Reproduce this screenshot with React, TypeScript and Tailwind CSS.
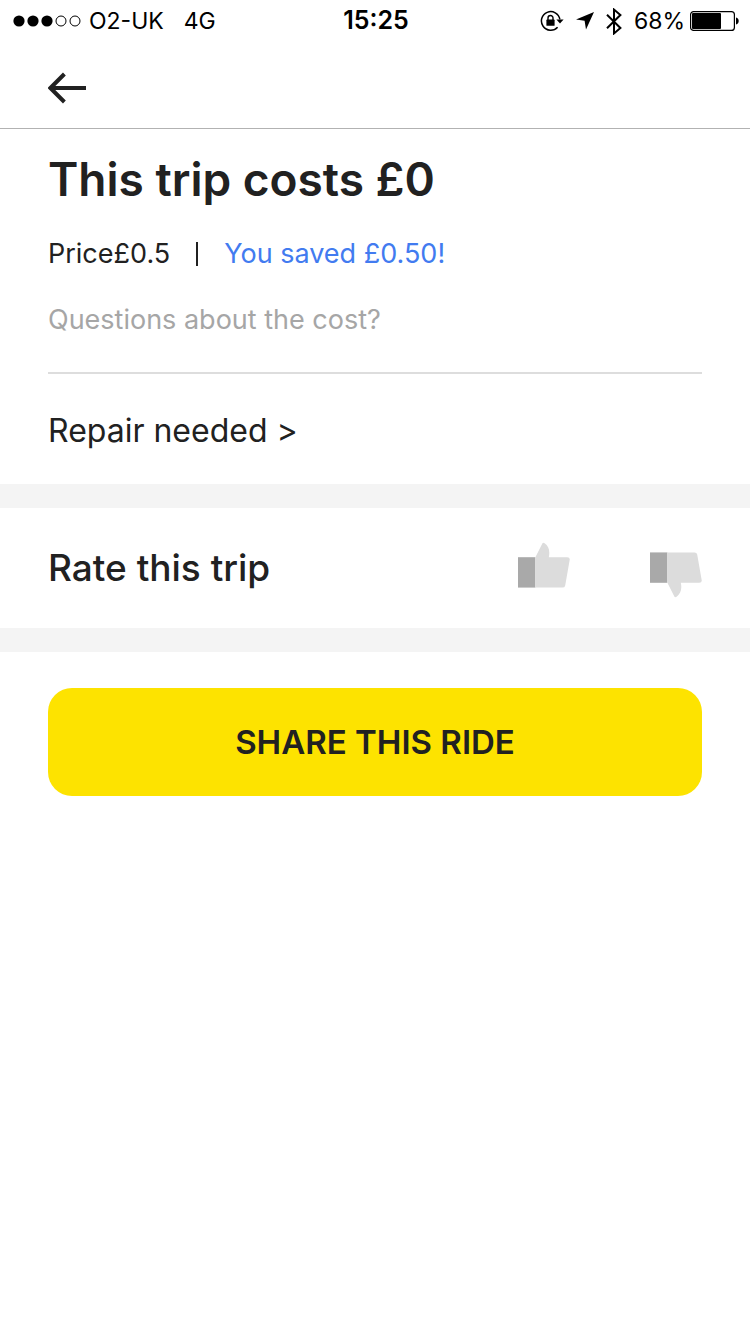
function SignalDots() {
  return (
    <svg width="68" height="12" viewBox="0 0 68 12" aria-hidden="true">
      {[6, 20, 34].map((x) => (
        <circle key={x} cx={x} cy="6" r="5.6" fill="#000" />
      ))}
      {[48, 62].map((x) => (
        <circle key={x} cx={x} cy="6" r="5" fill="none" stroke="#000" />
      ))}
    </svg>
  );
}

function RotationLockIcon() {
  return (
    <svg width="24" height="22" viewBox="0 0 24 22" fill="none" aria-hidden="true">
      <path d="M17.6 17.2A9.3 9.3 0 1 1 19.9 9.400" stroke="#000" strokeWidth="1.5" />
      <path d="M16.4 9.4h7.2l-3.600 4.200z" fill="#000" />
      <rect x="6.4" y="9.6" width="8.2" height="6.2" rx="0.6" fill="#000" />
      <path d="M8 10V8a2.5 2.5 0 0 1 5 0v2" stroke="#000" strokeWidth="1.4" />
    </svg>
  );
}

function LocationIcon() {
  return (
    <svg width="18" height="18" viewBox="0 0 18 18" aria-hidden="true">
      <path d="M18 0 0 7.6l8.6 1.2L10 17.6z" fill="#000" />
    </svg>
  );
}

function BluetoothIcon() {
  return (
    <svg width="16" height="27" viewBox="0 0 16 27" fill="none" aria-hidden="true">
      <path d="M1 6.8 14.4 20 8 25.4V1.6L14.4 7 1 20.2" stroke="#000" strokeWidth="2" />
    </svg>
  );
}

function BatteryIcon() {
  return (
    <svg width="49" height="20" viewBox="0 0 49 20" fill="none" aria-hidden="true">
      <rect x="0.6" y="0.6" width="43.8" height="18.8" rx="3" stroke="#000" strokeWidth="1.2" />
      <rect x="2" y="2" width="29" height="16" rx="1" fill="#000" />
      <path d="M46 6.5c3.6.8 3.6 6.2 0 7z" fill="#000" />
    </svg>
  );
}

function BackArrow() {
  return (
    <svg width="38" height="32" viewBox="0 0 38 32" fill="none" aria-hidden="true">
      <path d="M38 16H3M16.4 2 2.4 16l14 14" stroke="#212121" strokeWidth="4" />
    </svg>
  );
}

function ThumbIcon({ down = false }: { down?: boolean }) {
  return (
    <svg
      width="52"
      height="60"
      viewBox={down ? "0 0 52 60" : "0 -4 52 60"}
      className={down ? "-scale-y-100" : undefined}
      aria-hidden="true"
    >
      <path d="M0 15.2h17.4v30.4H0z" fill="#a9a9a9" />
      <path
        d="M17.4 15.2 24.2 1.800q.8-1.600 2.400-.500C30.700 4 32.200 9 30.800 15.200H49.300q2.800 0 2.400 2.600L47.200 43.400q-.400 2.200-2.600 2.200H17.400z"
        fill="#dcdcdc"
      />
    </svg>
  );
}

export default function App() {
  return (
    <div className="min-h-screen bg-white text-[#212121] [font-family:Inter,'Liberation_Sans',sans-serif]">
      <div className="grid h-10 grid-cols-[1fr_auto_1fr] items-center pt-0.5 pr-[11px] pl-[13px] text-[23px] text-black">
        <div className="flex items-center gap-2">
          <SignalDots />
          <span>O2-UK</span>
          <span className="pl-3">4G</span>
        </div>
        <time className="text-[25px] font-semibold">15:25</time>
        <div className="flex items-center justify-end gap-3">
          <RotationLockIcon />
          <LocationIcon />
          <BluetoothIcon />
          <div className="flex items-center gap-[5px]">
            <span>68%</span>
            <BatteryIcon />
          </div>
        </div>
      </div>

      <nav className="flex items-center border-b border-[#b2b2b2] px-12 pt-8 pb-6">
        <button type="button" aria-label="Back">
          <BackArrow />
        </button>
      </nav>

      <main>
        <section className="px-12 pt-[22px]">
          <h1 className="text-[46px] leading-14 font-semibold">This trip costs £0</h1>
          <p className="mt-[26px] flex items-center text-[27px] leading-[42px]">
            <span>Price£0.5</span>
            <span className="mx-[26px] h-6 w-0.5 bg-[#212121]" />
            <span className="text-[#427bf0]">You saved £0.50!</span>
          </p>
          <a href="#cost" className="mt-6 block text-[27px] leading-[42px] text-[#a6a6a6]">
            Questions about the cost?
          </a>
          <a href="#repair" className="mt-[31px] block border-t-2 border-[#dddddd] pt-8 pb-7 text-[32px] leading-[50px]">
            Repair needed &gt;
          </a>
        </section>

        <section className="flex items-center justify-between border-y-24 border-[#f4f4f4] px-12 py-[30px]">
          <h2 className="text-[37px] leading-14 font-medium">Rate this trip</h2>
          <div className="flex items-center gap-20">
            <button type="button" aria-label="Thumbs up">
              <ThumbIcon />
            </button>
            <button type="button" aria-label="Thumbs down">
              <ThumbIcon down />
            </button>
          </div>
        </section>

        <div className="px-12 py-9">
          <button type="button" className="w-full rounded-3xl bg-[#fde300] py-7 text-[33px] leading-13 font-semibold">
            SHARE THIS RIDE
          </button>
        </div>
      </main>
    </div>
  );
}
